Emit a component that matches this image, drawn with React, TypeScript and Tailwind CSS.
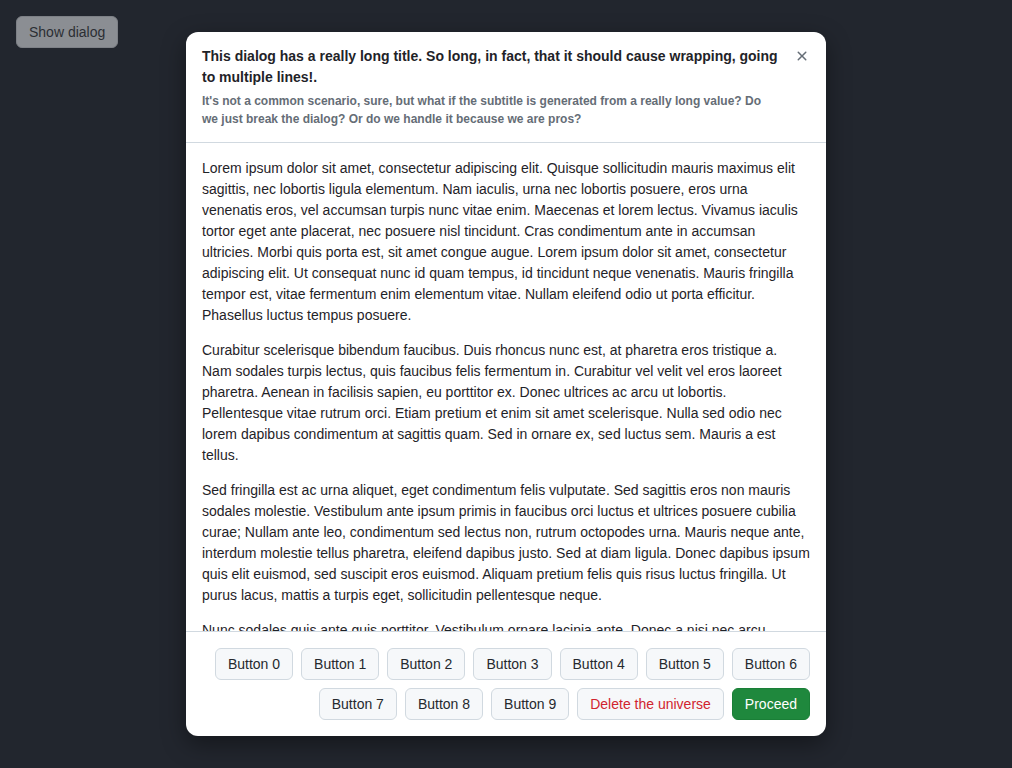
const PARAGRAPHS = [
  'Lorem ipsum dolor sit amet, consectetur adipiscing elit. Quisque sollicitudin mauris maximus elit sagittis, nec lobortis ligula elementum. Nam iaculis, urna nec lobortis posuere, eros urna venenatis eros, vel accumsan turpis nunc vitae enim. Maecenas et lorem lectus. Vivamus iaculis tortor eget ante placerat, nec posuere nisl tincidunt. Cras condimentum ante in accumsan ultricies. Morbi quis porta est, sit amet congue augue. Lorem ipsum dolor sit amet, consectetur adipiscing elit. Ut consequat nunc id quam tempus, id tincidunt neque venenatis. Mauris fringilla tempor est, vitae fermentum enim elementum vitae. Nullam eleifend odio ut porta efficitur. Phasellus luctus tempus posuere.',
  'Curabitur scelerisque bibendum faucibus. Duis rhoncus nunc est, at pharetra eros tristique a. Nam sodales turpis lectus, quis faucibus felis fermentum in. Curabitur vel velit vel eros laoreet pharetra. Aenean in facilisis sapien, eu porttitor ex. Donec ultrices ac arcu ut lobortis. Pellentesque vitae rutrum orci. Etiam pretium et enim sit amet scelerisque. Nulla sed odio nec lorem dapibus condimentum at sagittis quam. Sed in ornare ex, sed luctus sem. Mauris a est tellus.',
  'Sed fringilla est ac urna aliquet, eget condimentum felis vulputate. Sed sagittis eros non mauris sodales molestie. Vestibulum ante ipsum primis in faucibus orci luctus et ultrices posuere cubilia curae; Nullam ante leo, condimentum sed lectus non, rutrum octopodes urna. Mauris neque ante, interdum molestie tellus pharetra, eleifend dapibus justo. Sed at diam ligula. Donec dapibus ipsum quis elit euismod, sed suscipit eros euismod. Aliquam pretium felis quis risus luctus fringilla. Ut purus lacus, mattis a turpis eget, sollicitudin pellentesque neque.',
  'Nunc sodales quis ante quis porttitor. Vestibulum ornare lacinia ante. Donec a nisi nec arcu tincidunt placerat. Integer sed magna at lorem aliquet consequat. Nulla facilisi. Praesent vitae magna non nisi lacinia tempor.',
]

export default function App() {
  const buttons = Array.from({ length: 10 }, (_, i) => `Button ${i}`)

  return (
    <div
      className="relative h-[768px] w-full overflow-hidden bg-[#22262e] text-[#1f2328]"
      style={{ fontFamily: '"Liberation Sans", Arial, sans-serif' }}
    >
      {/* page behind the overlay */}
      <div className="p-4">
        <button className="h-8 px-3 rounded-md border border-[#7d8086] bg-[#8b8e93] text-sm text-[#2b2e33]">
          Show dialog
        </button>
      </div>

      {/* dialog */}
      <div className="absolute left-[186px] top-8 w-[640px] h-[704px] flex flex-col bg-white rounded-xl shadow-[0_8px_24px_rgba(0,0,0,0.4)] overflow-hidden">
        <header className="shrink-0 flex items-start gap-2 px-4 pt-[14px] pb-[14px] border-b border-[#d1d9e0]">
          <div className="flex-1 min-w-0">
            <h1 className="text-sm font-bold leading-[21px] text-[#1f2328]">
              This dialog has a really long title. So long, in fact, that it should cause wrapping, going to multiple lines!.
            </h1>
            <p className="mt-1 text-xs font-semibold leading-[18px] text-[#656d76] pr-4">
              It's not a common scenario, sure, but what if the subtitle is generated from a really long value? Do we just break the dialog? Or do we handle it because we are pros?
            </p>
          </div>
          <button className="shrink-0 w-4 h-4 mt-[2px] flex items-center justify-center text-[#656d76]">
            <svg width="16" height="16" viewBox="0 0 16 16" fill="currentColor">
              <path d="M3.72 3.72a.75.75 0 0 1 1.06 0L8 6.94l3.22-3.22a.749.749 0 0 1 1.275.326.749.749 0 0 1-.215.734L9.06 8l3.22 3.22a.749.749 0 0 1-.326 1.275.749.749 0 0 1-.734-.215L8 9.06l-3.22 3.22a.751.751 0 0 1-1.042-.018.751.751 0 0 1-.018-1.042L6.94 8 3.72 4.78a.75.75 0 0 1 0-1.06Z" />
            </svg>
          </button>
        </header>

        <main className="flex-1 min-h-0 overflow-hidden px-4 pt-[15px]">
          {PARAGRAPHS.map(p => (
            <p key={p.slice(0, 12)} className="mb-[14px] text-sm leading-[21px] text-[#1f2328]">
              {p}
            </p>
          ))}
        </main>

        <footer className="shrink-0 flex flex-wrap justify-end gap-2 p-4 border-t border-[#d1d9e0]">
          {buttons.map(b => (
            <button key={b} className="h-8 px-3 rounded-md border border-[#d1d9e0] bg-[#f6f8fa] text-sm text-[#25292e]">
              {b}
            </button>
          ))}
          <button className="h-8 px-3 rounded-md border border-[#d1d9e0] bg-[#f6f8fa] text-sm text-[#d1242f]">
            Delete the universe
          </button>
          <button className="h-8 px-3 rounded-md border border-[#1a7f37] bg-[#1f883d] text-sm text-white">
            Proceed
          </button>
        </footer>
      </div>
    </div>
  )
}
